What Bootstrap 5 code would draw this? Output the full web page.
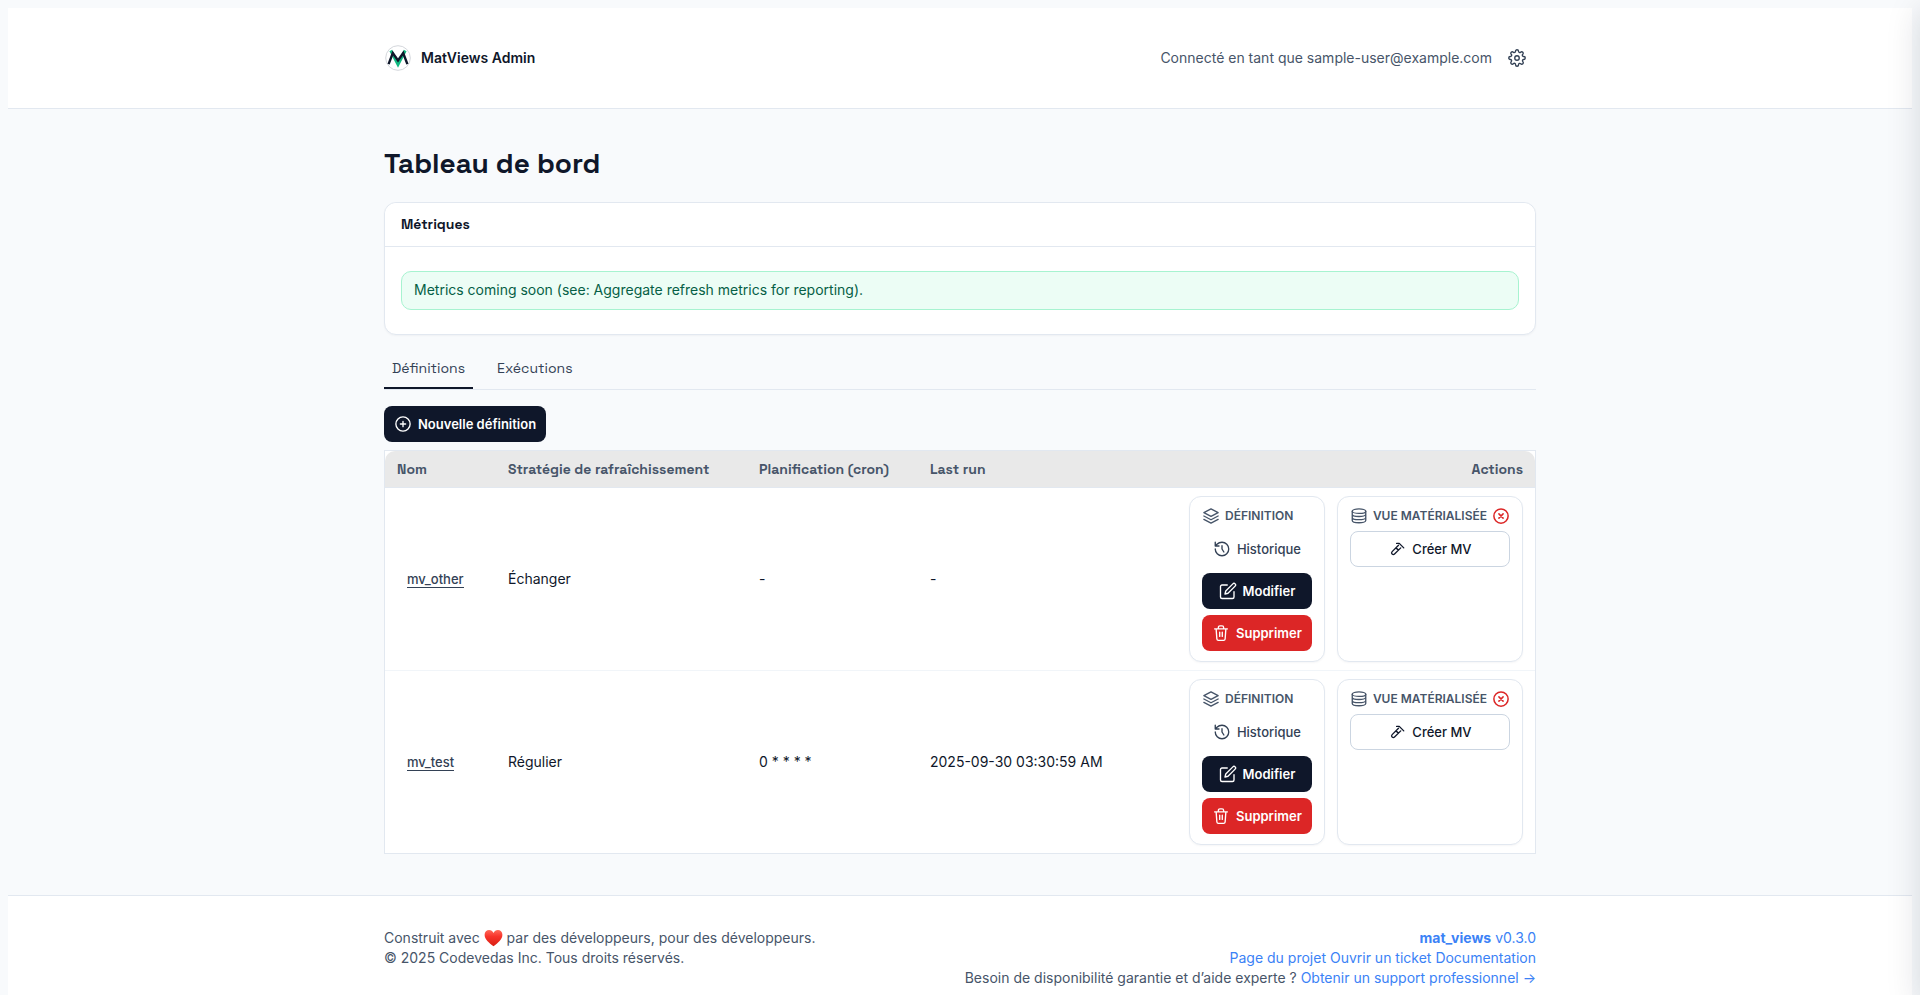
<!DOCTYPE html>
<html lang="fr">
<head>
<meta charset="utf-8">
<meta name="viewport" content="width=device-width, initial-scale=1">
<title>MatViews Admin</title>
<link href="https://cdn.jsdelivr.net/npm/bootstrap@5.3.0/dist/css/bootstrap.min.css" rel="stylesheet">
<style>
  :root { --ink: #0f172a; --slate: #475569; --steel: #334155; --line: #e2e8f0; --danger: #dc2626; }
  body { background: #f8fafc; color: var(--ink); font-family: Inter, "Liberation Sans", sans-serif; font-size: 14px; line-height: 20px; padding: 8px 8px 0; min-height: 100vh; }
  .wrap { width: 100%; max-width: 1200px; margin: 0 auto; padding: 0 24px; }
  .display-face { font-family: "Space Grotesk", Inter, sans-serif; }
  .ico { width: 18px; height: 18px; flex: none; fill: none; stroke: currentColor; stroke-width: 1.8; stroke-linecap: round; stroke-linejoin: round; }
  .ico-red { color: var(--danger); stroke-width: 2; }
  .site-header { background: #fff; border-bottom: 1px solid var(--line); }
  .site-header .wrap { height: 100px; }
  .brand { color: var(--ink); font-weight: 600; gap: 9px; }
  .logo { width: 28px; height: 28px; }
  .user-box { color: var(--slate); gap: 6px; }
  .gear { border: 0; background: none; color: var(--steel); padding: 10px; line-height: 1; }
  .page-title { font-size: 28px; line-height: 36px; font-weight: 600; margin: 36px 0 21px; }
  .panel { border: 1px solid var(--line); border-radius: 12px; box-shadow: 0 1px 2px rgba(15,23,42,.04); }
  .panel .card-header { background: #fff; border-bottom: 1px solid var(--line); border-radius: 12px 12px 0 0; padding: 11px 16px 12px; }
  .panel .card-header h2 { font-size: 14px; line-height: 20px; font-weight: 600; margin: 0; }
  .panel .card-body { padding: 24px 16px; }
  .notice { background: #ecfdf5; border: 1px solid #a7f3d0; color: #065f46; border-radius: 10px; padding: 8px 12px 9px; }
  .tabs { border-bottom: 1px solid var(--line); margin-top: 16px; gap: 16px; }
  .tabs button { border: 0; border-bottom: 2px solid transparent; background: none; color: var(--steel); padding: 7px 8px 9px; height: 38px; }
  .tabs button.active { border-color: var(--ink); }
  .act { display: inline-flex; align-items: center; justify-content: center; gap: 6px; height: 36px; padding: 0 9px; border: 1px solid transparent; border-radius: 8px; font-size: 13px; line-height: 20px; font-weight: 500; color: var(--steel); background: none; }
  .act-dark { background: var(--ink); color: #fff; font-weight: 600; }
  .act-red { background: var(--danger); color: #fff; font-weight: 600; }
  .act-line { background: #fff; border-color: #cbd5e1; color: var(--ink); }
  .grid-frame { background: #fff; border: 1px solid var(--line); margin-top: 8px; }
  .defs { width: 100%; table-layout: fixed; border-collapse: separate; border-spacing: 0; }
  .c-name { width: 111px; } .c-plan { width: 251px; } .c-cron { width: 171px; }
  .defs th { background: #e9e9e9; color: var(--slate); font-weight: 600; padding: 8px 12px; border-bottom: 1px solid var(--line); }
  .defs th:first-child { border-top-left-radius: 10px; }
  .defs th:last-child { border-top-right-radius: 10px; }
  .defs td { padding: 8px 12px; vertical-align: middle; }
  .defs tr + tr td { border-top: 1px solid #f1f5f9; }
  .name-link { font-size: 13px; font-weight: 500; color: var(--steel); margin-left: 10px; text-decoration: none; border-bottom: 1px solid currentColor; }
  .boxes { gap: 12px; }
  .box { background: #fff; border: 1px solid var(--line); border-radius: 12px; padding: 10px 12px; gap: 6px; box-shadow: 0 1px 2px rgba(15,23,42,.04); }
  .box-title { gap: 5px; height: 18px; font-size: 12px; line-height: 18px; font-weight: 600; color: var(--slate); text-transform: uppercase; margin: 0; white-space: nowrap; }
  .site-footer { background: #fff; border-top: 1px solid var(--line); margin-top: 41px; color: var(--slate); }
  .site-footer .wrap { padding-top: 32px; padding-bottom: 8px; }
  .site-footer a { color: #3b82f6; text-decoration: none; }
  .heart { width: 19px; height: 18px; vertical-align: -4px; }
  .drawer { position: fixed; top: 0; bottom: 0; left: 100%; width: 420px; background: #fff; box-shadow: 0 10px 32px rgba(15,23,42,.15); }
</style>
</head>
<body class="d-flex flex-column">
<svg class="d-none" aria-hidden="true">
  <symbol id="i-layers" viewBox="0 0 24 24"><path d="M12 2.500 21.500 7.500 12 12.500 2.500 7.500zM2.500 12 12 17l9.500-5M2.500 16.500 12 21.500l9.500-5"/></symbol>
  <symbol id="i-history" viewBox="0 0 24 24"><path d="M3 12a9 9 0 1 0 9-9 9.750 9.750 0 0 0-6.740 2.740L3 8M3 3v5h5M12 7.500V12l2.500 4"/></symbol>
  <symbol id="i-edit" viewBox="0 0 24 24"><path d="M11 4H4a2 2 0 0 0-2 2v14a2 2 0 0 0 2 2h14a2 2 0 0 0 2-2v-7"/><path d="M18.500 2.500a2.120 2.120 0 0 1 3 3L12 15l-4 1 1-4z"/></symbol>
  <symbol id="i-trash" viewBox="0 0 24 24"><path d="M3.500 6.500h17M5.500 6.500l1 13.500a2 2 0 0 0 2 1.800h7a2 2 0 0 0 2-1.800l1-13.500M8.500 6.500V4.500a2 2 0 0 1 2-2h3a2 2 0 0 1 2 2v2M10.300 11v5.500M13.700 11v5.500"/></symbol>
  <symbol id="i-db" viewBox="0 0 24 24"><ellipse cx="12" cy="5.500" rx="9" ry="3"/><path d="M3 5.500v12.500c0 1.660 4 3 9 3s9-1.340 9-3V5.500M3 9.700c0 1.660 4 3 9 3s9-1.340 9-3M3 13.900c0 1.660 4 3 9 3s9-1.340 9-3"/></symbol>
  <symbol id="i-x" viewBox="0 0 24 24"><circle cx="12" cy="12" r="9.500"/><path d="m9.200 9.200 5.600 5.600M14.800 9.200l-5.600 5.600"/></symbol>
  <symbol id="i-plus" viewBox="0 0 24 24"><circle cx="12" cy="12" r="9.500"/><path d="M12 8.500v7M8.500 12h7"/></symbol>
  <symbol id="i-hammer" viewBox="0 0 24 24"><path d="M11.500 4.500h3.500l6 6M14 7l-8.500 8.500a2.300 2.300 0 0 0 0 3.200 2.300 2.300 0 0 0 3.200 0L17 10.500M10.500 10.500l3.500 3"/></symbol>
  <symbol id="i-gear" viewBox="0 0 24 24"><circle cx="12" cy="12" r="3"/><path d="M19.400 15a1.650 1.650 0 0 0 .33 1.820l.06.06a2 2 0 1 1-2.830 2.830l-.06-.06a1.650 1.650 0 0 0-2.820 1.170V21a2 2 0 0 1-4 0v-.09a1.650 1.650 0 0 0-2.900-1.260l-.06.06a2 2 0 1 1-2.830-2.830l.06-.06A1.650 1.650 0 0 0 3.180 14H3a2 2 0 0 1 0-4h.09a1.650 1.650 0 0 0 1.260-2.900l-.06-.06a2 2 0 1 1 2.830-2.830l.06.06A1.650 1.650 0 0 0 10 3.180V3a2 2 0 0 1 4 0v.09a1.650 1.650 0 0 0 2.820 1.170l.06-.06a2 2 0 1 1 2.830 2.830l-.06.06A1.650 1.650 0 0 0 20.910 10H21a2 2 0 0 1 0 4h-.09a1.650 1.650 0 0 0-1.510 1z"/></symbol>
</svg>

<header class="site-header">
  <div class="wrap d-flex align-items-center justify-content-between">
    <a href="#" class="brand d-flex align-items-center text-decoration-none">
      <svg class="logo" viewBox="0 0 28 28" aria-hidden="true"><circle cx="14" cy="14" r="12.300" fill="#fff" stroke="#d4d7dc"/><path d="M6.800 6.500 14 20.500 21.200 6.500" fill="none" stroke="#10b981" stroke-width="3"/><path d="M4.600 20.200 8.800 9 14 16.500 19.200 9l4.200 11.200" fill="none" stroke="#0f172a" stroke-width="2.400"/></svg>
      MatViews Admin
    </a>
    <div class="user-box d-flex align-items-center">
      <span>Connecté en tant que sample-user@example.com</span>
      <button type="button" class="gear" aria-label="Préférences"><svg class="ico"><use href="#i-gear"/></svg></button>
    </div>
  </div>
</header>

<main class="wrap">
  <h1 class="page-title display-face">Tableau de bord</h1>
  <section class="card panel">
    <div class="card-header"><h2 class="display-face">Métriques</h2></div>
    <div class="card-body"><div class="notice">Metrics coming soon (see: Aggregate refresh metrics for reporting).</div></div>
  </section>

  <div class="tabs d-flex display-face" role="tablist">
    <button type="button" role="tab" aria-selected="true" class="active">Définitions</button>
    <button type="button" role="tab" aria-selected="false">Exécutions</button>
  </div>

  <div class="mt-3"><button type="button" class="act act-dark"><svg class="ico"><use href="#i-plus"/></svg>Nouvelle définition</button></div>

  <div class="grid-frame">
    <table class="defs">
      <colgroup><col class="c-name"><col class="c-plan"><col class="c-cron"><col><col></colgroup>
      <thead class="display-face">
        <tr><th scope="col">Nom</th><th scope="col">Stratégie de rafraîchissement</th><th scope="col">Planification (cron)</th><th scope="col">Last run</th><th scope="col" class="text-end">Actions</th></tr>
      </thead>
      <tbody>
        <tr>
          <td><a href="#" class="name-link">mv_other</a></td><td>Échanger</td><td>-</td><td>-</td>
          <td>
            <div class="boxes d-flex justify-content-end">
              <div class="box d-flex flex-column">
                <h3 class="box-title d-flex align-items-center"><svg class="ico"><use href="#i-layers"/></svg>Définition</h3>
                <button type="button" class="act"><svg class="ico"><use href="#i-history"/></svg>Historique</button>
                <button type="button" class="act act-dark"><svg class="ico"><use href="#i-edit"/></svg>Modifier</button>
                <button type="button" class="act act-red"><svg class="ico"><use href="#i-trash"/></svg>Supprimer</button>
              </div>
              <div class="box d-flex flex-column">
                <h3 class="box-title d-flex align-items-center"><svg class="ico"><use href="#i-db"/></svg>Vue matérialisée<svg class="ico ico-red"><use href="#i-x"/></svg></h3>
                <button type="button" class="act act-line"><svg class="ico"><use href="#i-hammer"/></svg>Créer MV</button>
              </div>
            </div>
          </td>
        </tr>
        <tr>
          <td><a href="#" class="name-link">mv_test</a></td><td>Régulier</td><td>0 * * * *</td><td>2025-09-30 03:30:59 AM</td>
          <td>
            <div class="boxes d-flex justify-content-end">
              <div class="box d-flex flex-column">
                <h3 class="box-title d-flex align-items-center"><svg class="ico"><use href="#i-layers"/></svg>Définition</h3>
                <button type="button" class="act"><svg class="ico"><use href="#i-history"/></svg>Historique</button>
                <button type="button" class="act act-dark"><svg class="ico"><use href="#i-edit"/></svg>Modifier</button>
                <button type="button" class="act act-red"><svg class="ico"><use href="#i-trash"/></svg>Supprimer</button>
              </div>
              <div class="box d-flex flex-column">
                <h3 class="box-title d-flex align-items-center"><svg class="ico"><use href="#i-db"/></svg>Vue matérialisée<svg class="ico ico-red"><use href="#i-x"/></svg></h3>
                <button type="button" class="act act-line"><svg class="ico"><use href="#i-hammer"/></svg>Créer MV</button>
              </div>
            </div>
          </td>
        </tr>
      </tbody>
    </table>
  </div>
</main>

<footer class="site-footer flex-grow-1">
  <div class="wrap d-flex justify-content-between">
    <div>
      <div>Construit avec <svg class="heart" viewBox="0 0 19 18" role="img" aria-label="cœur"><defs><linearGradient id="hg" x1="0" y1="0" x2="0" y2="1"><stop offset="0" stop-color="#ff6a5a"/><stop offset=".4" stop-color="#f8352c"/><stop offset="1" stop-color="#d81e12"/></linearGradient></defs><path d="M9.500 17.200C5 13.800.6 10.300.6 5.700.6 2.700 2.700.9 5.100.9c2 0 3.500 1.100 4.400 3 .9-1.900 2.400-3 4.400-3 2.400 0 4.500 1.800 4.500 4.800 0 4.600-4.400 8.100-8.900 11.500z" fill="url(#hg)"/></svg> par des développeurs, pour des développeurs.</div>
      <div>© 2025 Codevedas Inc. Tous droits réservés.</div>
    </div>
    <div class="text-end">
      <div><a href="#"><strong>mat_views</strong> v0.3.0</a></div>
      <div><a href="#">Page du projet</a> <a href="#">Ouvrir un ticket</a> <a href="#">Documentation</a></div>
      <div>Besoin de disponibilité garantie et d’aide experte ? <a href="#">Obtenir un support professionnel →</a></div>
    </div>
  </div>
</footer>
<div class="drawer" aria-hidden="true"></div>
<script src="https://cdn.jsdelivr.net/npm/bootstrap@5.3.0/dist/js/bootstrap.bundle.min.js"></script>
</body>
</html>
